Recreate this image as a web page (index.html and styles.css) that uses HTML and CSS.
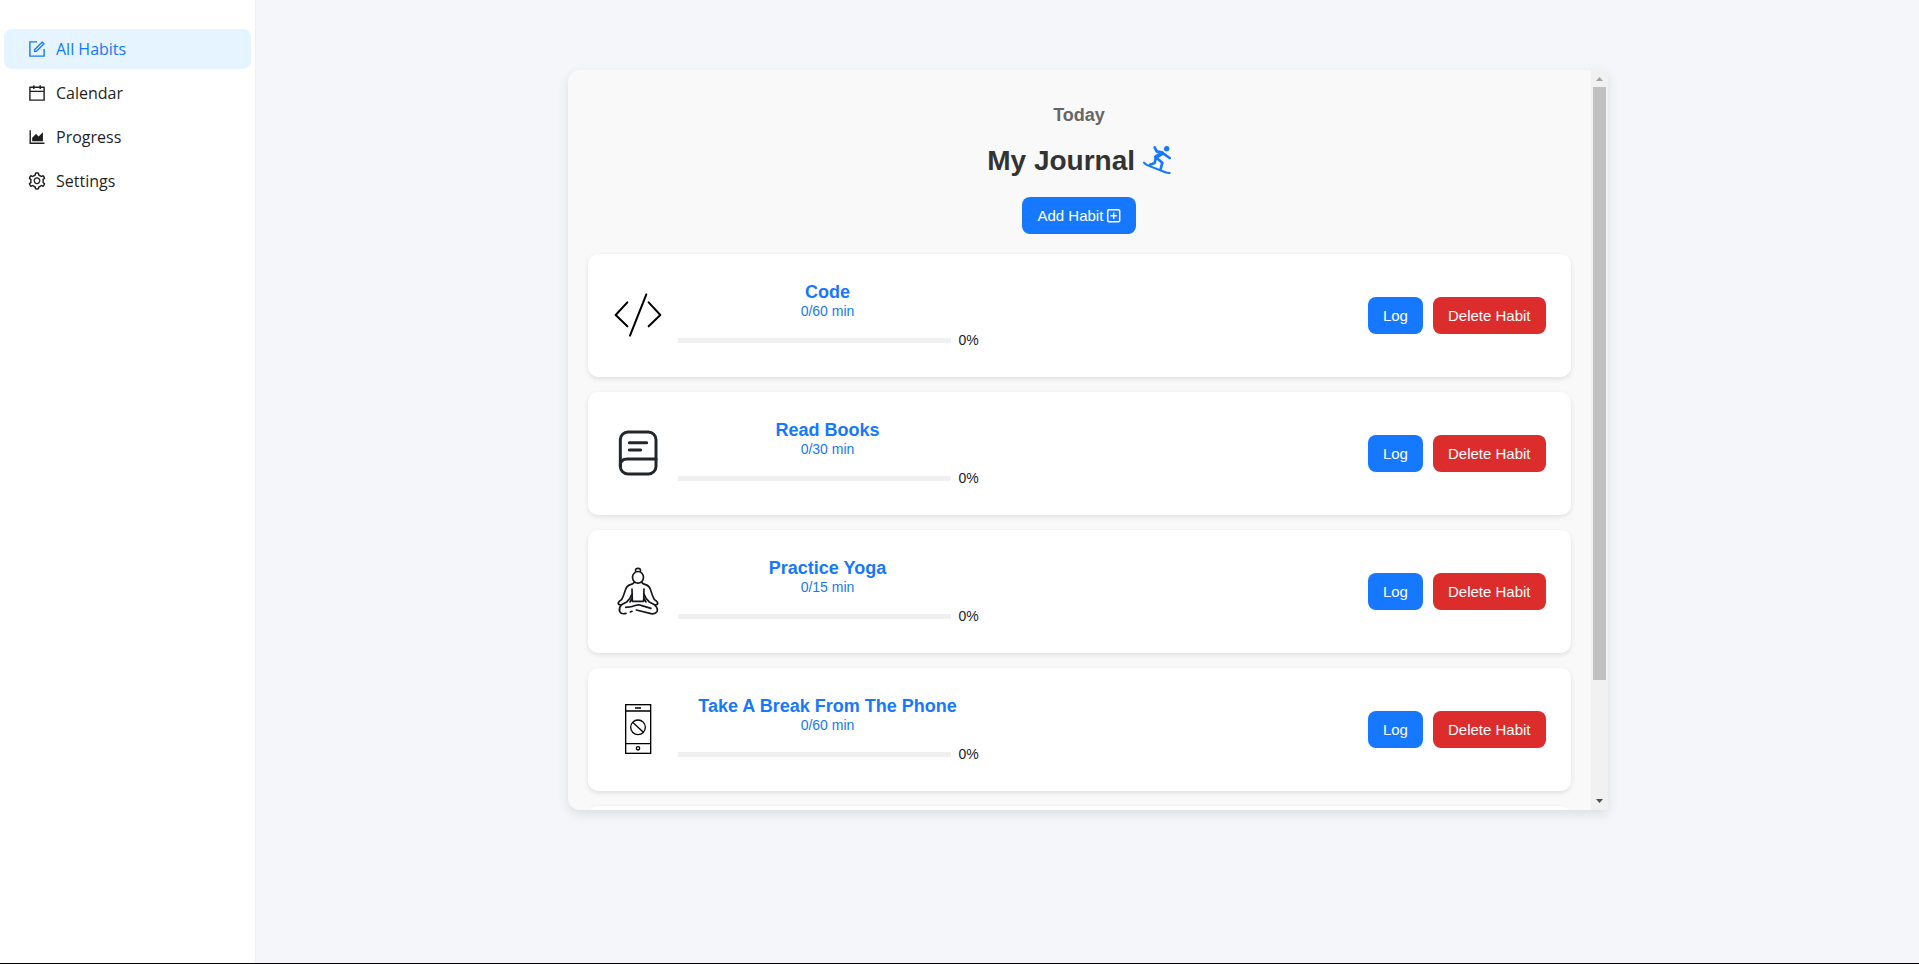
FILE: index.html
```html
<!DOCTYPE html>
<html lang="en">
<head>
<meta charset="utf-8">
<meta name="viewport" content="width=device-width, initial-scale=1">
<title>My Journal</title>
<link rel="stylesheet" href="styles.css">
</head>
<body>
<div class="layout">
  <nav class="sidebar" aria-label="Main">
    <a class="nav-item nav-item-active" href="#habits" aria-current="page">
      <svg class="nav-icon" viewBox="0 0 1024 1024" aria-hidden="true"><path d="M904 512h-56c-4.400 0-8 3.600-8 8v320H184V184h320c4.400 0 8-3.600 8-8v-56c0-4.400-3.600-8-8-8H144c-17.700 0-32 14.300-32 32v736c0 17.700 14.300 32 32 32h736c17.700 0 32-14.300 32-32V520c0-4.400-3.600-8-8-8z"/><path d="M355.900 534.900L354 653.800c-.1 8.900 7.100 16.200 16 16.200h.4l118-2.900c2-.1 4-.9 5.400-2.300l415.900-415c3.100-3.100 3.100-8.200 0-11.300L785.400 114.300c-1.600-1.600-3.600-2.300-5.700-2.300s-4.100.8-5.700 2.300l-415.800 415a8.300 8.300 0 0 0-2.300 5.600zm63.500 23.600L779.700 199l45.200 45.100-360.500 359.700-45.700 1.100.7-46.400z"/></svg>
      <span>All Habits</span>
    </a>
    <a class="nav-item" href="#calendar">
      <svg class="nav-icon" viewBox="0 0 1024 1024" aria-hidden="true"><path d="M880 184H712v-64c0-4.400-3.600-8-8-8h-56c-4.400 0-8 3.600-8 8v64H384v-64c0-4.400-3.600-8-8-8h-56c-4.400 0-8 3.600-8 8v64H144c-17.700 0-32 14.300-32 32v664c0 17.700 14.300 32 32 32h736c17.700 0 32-14.300 32-32V216c0-17.700-14.300-32-32-32zm-40 656H184V460h656v380zM184 392V256h128v48c0 4.400 3.600 8 8 8h56c4.400 0 8-3.600 8-8v-48h256v48c0 4.400 3.600 8 8 8h56c4.400 0 8-3.600 8-8v-48h128v136H184z"/></svg>
      <span>Calendar</span>
    </a>
    <a class="nav-item" href="#progress">
      <svg class="nav-icon" viewBox="0 0 1024 1024" aria-hidden="true"><path d="M888 792H200V168c0-4.400-3.600-8-8-8h-56c-4.400 0-8 3.600-8 8v688c0 4.400 3.600 8 8 8h752c4.400 0 8-3.600 8-8v-56c0-4.400-3.600-8-8-8zm-616-64h536c4.400 0 8-3.600 8-8V284c0-7.200-8.700-10.700-13.700-5.700L592 488.600l-125.400-124a8.030 8.030 0 0 0-11.300 0l-189 189.600a7.870 7.870 0 0 0-2.300 5.600V720c0 4.400 3.600 8 8 8z"/></svg>
      <span>Progress</span>
    </a>
    <a class="nav-item" href="#settings">
      <svg class="nav-icon" viewBox="0 0 1024 1024" aria-hidden="true"><path d="M924.800 625.700l-65.500-56c3.100-19 4.700-38.400 4.700-57.800s-1.600-38.800-4.700-57.800l65.500-56a32.030 32.030 0 0 0 9.300-35.200l-.9-2.600a443.740 443.740 0 0 0-79.700-137.900l-1.800-2.100a32.120 32.120 0 0 0-35.100-9.500l-81.300 28.900c-30-24.600-63.500-44-99.700-57.600l-15.700-85a32.050 32.050 0 0 0-25.800-25.700l-2.700-.5c-52.100-9.400-106.900-9.400-159 0l-2.700.5a32.050 32.050 0 0 0-25.800 25.700l-15.800 85.400a351.860 351.860 0 0 0-99 57.400l-81.900-29.100a32 32 0 0 0-35.100 9.500l-1.800 2.100a446.020 446.020 0 0 0-79.700 137.900l-.9 2.600c-4.500 12.500-.8 26.500 9.300 35.200l66.300 56.600c-3.100 18.800-4.600 38-4.600 57.100 0 19.200 1.500 38.400 4.600 57.100L99 625.500a32.030 32.030 0 0 0-9.300 35.200l.9 2.600c18.100 50.400 44.900 96.900 79.700 137.900l1.800 2.100a32.120 32.120 0 0 0 35.100 9.500l81.900-29.100c29.800 24.500 63.100 43.900 99 57.400l15.800 85.400a32.050 32.050 0 0 0 25.800 25.700l2.700.5a449.400 449.400 0 0 0 159 0l2.700-.5a32.050 32.050 0 0 0 25.800-25.700l15.700-85a350 350 0 0 0 99.700-57.600l81.300 28.900a32 32 0 0 0 35.100-9.500l1.800-2.100c34.800-41.100 61.600-87.500 79.700-137.900l.9-2.600c4.500-12.300.8-26.300-9.300-35zM788.300 465.900c2.500 15.100 3.800 30.600 3.800 46.100s-1.300 31-3.800 46.100l-6.600 40.100 74.700 63.900a370.030 370.030 0 0 1-42.600 73.600L721 702.800l-31.400 25.800c-23.900 19.600-50.500 35-79.300 45.800l-38.100 14.300-17.900 97a377.500 377.500 0 0 1-85 0l-17.900-97.200-37.800-14.500c-28.500-10.800-55-26.200-78.700-45.700l-31.400-25.900-93.400 33.200c-17-22.900-31.200-47.600-42.600-73.600l75.500-64.500-6.500-40c-2.400-14.900-3.700-30.300-3.700-45.500 0-15.300 1.200-30.600 3.700-45.500l6.500-40-75.500-64.500c11.300-26.100 25.600-50.700 42.600-73.600l93.400 33.200 31.400-25.900c23.700-19.500 50.200-34.900 78.700-45.700l37.900-14.300 17.900-97.200c28.100-3.200 56.800-3.200 85 0l17.900 97 38.100 14.300c28.700 10.800 55.400 26.200 79.300 45.800l31.400 25.800 92.800-32.900c17 22.900 31.200 47.600 42.600 73.600L781.800 426l6.500 39.900zM512 326c-97.200 0-176 78.800-176 176s78.800 176 176 176 176-78.800 176-176-78.800-176-176-176zm79.200 255.200A111.600 111.600 0 0 1 512 614c-29.900 0-58-11.700-79.200-32.800A111.600 111.600 0 0 1 400 502c0-29.900 11.700-58 32.800-79.200C454 401.600 482.100 390 512 390c29.900 0 58 11.600 79.200 32.800A111.600 111.600 0 0 1 624 502c0 29.900-11.700 58-32.800 79.200z"/></svg>
      <span>Settings</span>
    </a>
  </nav>

  <main class="content">
    <section class="journal">
      <div class="journal-scroll">
        <header class="journal-header">
          <h2 class="journal-day">Today</h2>
          <h1 class="journal-title">My Journal
            <svg class="title-icon" viewBox="131 16 84 84" aria-hidden="true"><circle cx="202" cy="24" r="8"/><g fill="none" stroke="#1677ff" stroke-linecap="round" stroke-linejoin="round"><path stroke-width="6" d="M134 66Q138 71 145 74L196 94Q203 97 211 97"/><path stroke-width="8" d="M166 20L172 32L187 35L211 52M169 54L166 67L152 72M172 52L189 66L184 85"/><path stroke-width="12" d="M188 38L170 49"/></g></svg>
          </h1>
          <button class="btn btn-primary" type="button">Add Habit
            <svg class="btn-icon" viewBox="0 0 15 15" aria-hidden="true"><rect x="1.700" y="1.700" width="12" height="12" rx="1.200"/><path d="M7.700 4.500v6.400M4.500 7.700h6.400"/></svg>
          </button>
        </header>

        <ul class="habit-list">
          <li class="habit">
            <svg class="habit-icon" viewBox="159 693 150 150" aria-hidden="true"><g fill="none" stroke="#000" stroke-width="6" stroke-linecap="round" stroke-linejoin="round"><path d="M202 727L167 765L202 799M266 727L301 765L266 799M259 703L210 827"/></g></svg>
            <div class="habit-info">
              <h3 class="habit-name">Code</h3>
              <p class="habit-goal">0/60 min</p>
              <div class="progress"><div class="progress-track" role="progressbar" aria-label="Code" aria-valuenow="0"></div><span class="progress-value">0%</span></div>
            </div>
            <div class="habit-actions"><button class="btn btn-primary" type="button">Log</button><button class="btn btn-danger" type="button">Delete Habit</button></div>
          </li>
          <li class="habit">
            <svg class="habit-icon" viewBox="39 57 150 150" aria-hidden="true"><g fill="none" stroke="#22272b" stroke-width="9" stroke-linecap="round"><rect x="61" y="66" width="107" height="126" rx="23"/><path d="M61 169V165Q61 147 82 147H168M88 98H140M88 120H122"/></g></svg>
            <div class="habit-info">
              <h3 class="habit-name">Read Books</h3>
              <p class="habit-goal">0/30 min</p>
              <div class="progress"><div class="progress-track" role="progressbar" aria-label="Read Books" aria-valuenow="0"></div><span class="progress-value">0%</span></div>
            </div>
            <div class="habit-actions"><button class="btn btn-primary" type="button">Log</button><button class="btn btn-danger" type="button">Delete Habit</button></div>
          </li>
          <li class="habit">
            <svg class="habit-icon" viewBox="39 50 150 150" aria-hidden="true"><g fill="none" stroke="#16161a" stroke-width="5" stroke-linecap="round" stroke-linejoin="round"><ellipse cx="114" cy="81" rx="16.500" ry="17.500"/><path d="M107 63Q105 54 114 54T121 63M103 95Q101 101 91 103Q80 106 77 117L70 137Q67 148 58 153Q53 157 56 162L63 164L80 155Q91 146 97 129M125 95Q127 101 137 103Q148 106 151 117L158 137Q161 148 170 153Q175 157 172 162L165 164L148 155Q137 146 131 129M96 116L97 153H131L132 116M97 142L90 155M131 142L138 155"/><path d="M63 165Q56 174 59 184Q64 193 78 189M165 165Q175 174 171 184Q166 192 153 190L109 179M77 171Q95 171 108 165Q116 162 123 165L153 174M91 185L96 183"/></g></svg>
            <div class="habit-info">
              <h3 class="habit-name">Practice Yoga</h3>
              <p class="habit-goal">0/15 min</p>
              <div class="progress"><div class="progress-track" role="progressbar" aria-label="Practice Yoga" aria-valuenow="0"></div><span class="progress-value">0%</span></div>
            </div>
            <div class="habit-actions"><button class="btn btn-primary" type="button">Log</button><button class="btn btn-danger" type="button">Delete Habit</button></div>
          </li>
          <li class="habit">
            <svg class="habit-icon" viewBox="39 45 150 150" aria-hidden="true"><g fill="none" stroke="#000" stroke-width="4"><rect x="77" y="44" width="75" height="146"/><path d="M77 63H152M77 161H152M105 54H123"/><circle cx="114" cy="112" r="22"/><path d="M98 97L130 127"/><circle cx="114" cy="175" r="5"/></g></svg>
            <div class="habit-info">
              <h3 class="habit-name">Take A Break From The Phone</h3>
              <p class="habit-goal">0/60 min</p>
              <div class="progress"><div class="progress-track" role="progressbar" aria-label="Take A Break From The Phone" aria-valuenow="0"></div><span class="progress-value">0%</span></div>
            </div>
            <div class="habit-actions"><button class="btn btn-primary" type="button">Log</button><button class="btn btn-danger" type="button">Delete Habit</button></div>
          </li>
          <li class="habit habit-empty"></li>
        </ul>
      </div>
      <div class="scrollbar" aria-hidden="true">
        <svg class="scroll-arrow scroll-arrow-up" viewBox="0 0 17 17"><path d="M5 11L8.500 7L12 11z"/></svg>
        <div class="scroll-track"><div class="scroll-thumb"></div></div>
        <svg class="scroll-arrow" viewBox="0 0 17 17"><path d="M5 6L8.500 10L12 6z"/></svg>
      </div>
    </section>
  </main>
</div>
</body>
</html>
```
FILE: styles.css
```css
* {
  box-sizing: border-box;
}

body {
  margin: 0;
  font-family: "Liberation Sans", Arial, sans-serif;
  color: #222;
  background: #f4f6fa;
}

h1, h2, h3, p, ul {
  margin: 0;
  padding: 0;
}

.layout {
  display: flex;
  min-height: 100vh;
  border-bottom: 1px solid #000;
}

.sidebar {
  display: flex;
  flex-direction: column;
  gap: 4px;
  width: 256px;
  flex-shrink: 0;
  padding: 29px 4px;
  background: #fff;
  border-right: 1px solid #f0f0f0;
}

.nav-item {
  display: flex;
  align-items: center;
  gap: 9px;
  height: 40px;
  padding: 0 23px;
  border-radius: 8px;
  font-family: "Open Sans", "Noto Sans", sans-serif;
  font-size: 16px;
  line-height: 24px;
  color: #1f1f1f;
  text-decoration: none;
}

.nav-item-active {
  color: #1677ff;
  background: #e6f4ff;
}

.nav-icon {
  width: 20px;
  height: 20px;
  fill: currentColor;
}

.content {
  display: flex;
  flex: 1;
  justify-content: center;
  align-items: flex-start;
  min-width: 0;
  padding: 70px 20px;
}

.journal {
  display: flex;
  flex: 1;
  max-width: 1040px;
  max-height: 740px;
  background: #f9f9f9;
  border-radius: 12px 0 0 12px;
  box-shadow: 0 4px 12px rgba(0, 0, 0, 0.1);
  overflow: hidden;
}

.journal-scroll {
  flex: 1;
  min-width: 0;
  padding: 35px 20px 20px;
  overflow-y: auto;
  scrollbar-width: none;
}

.journal-header {
  display: flex;
  flex-direction: column;
  align-items: center;
  gap: 20px;
  margin-bottom: 20px;
}

.journal-day {
  font-size: 18px;
  line-height: 20px;
  color: #666;
}

.journal-title {
  font-size: 28px;
  line-height: 32px;
  color: #333;
}

.title-icon {
  width: 28px;
  height: 28px;
  fill: #1677ff;
  vertical-align: -4px;
}

.btn {
  padding: 10px 15px;
  border: 0;
  border-radius: 8px;
  font-family: inherit;
  font-size: 15px;
  line-height: 17px;
  color: #fff;
  cursor: pointer;
}

.btn-primary {
  background: #1677ff;
}

.btn-danger {
  background: #dc2c2c;
}

.btn-icon {
  width: 15px;
  height: 15px;
  margin-left: -2px;
  fill: none;
  stroke: #fff;
  stroke-width: 1.5;
  vertical-align: -2px;
}

.habit-list {
  display: grid;
  gap: 15px;
  list-style: none;
}

.habit {
  display: flex;
  align-items: center;
  padding: 25px;
  background: #fff;
  border-radius: 10px;
  box-shadow: 0 2px 5px rgba(0, 0, 0, 0.1);
}

.habit-empty {
  min-height: 123px;
}

.habit-icon {
  width: 50px;
  height: 50px;
  margin-right: 15px;
  overflow: visible;
}

.habit-info {
  width: 300px;
  padding: 3px 0 1px;
  text-align: center;
}

.habit-name {
  font-size: 18px;
  line-height: 20px;
  color: #1677ff;
}

.habit-goal {
  font-size: 14px;
  line-height: 18px;
  color: #1677ff;
}

.progress {
  display: flex;
  align-items: center;
  gap: 8px;
  margin-top: 9px;
  font-size: 14px;
  line-height: 22px;
}

.progress-track {
  flex: 1;
  height: 5px;
  background: #f0f0f0;
}

.progress-value {
  width: 19px;
}

.habit-actions {
  display: flex;
  gap: 10px;
  margin-left: auto;
}

.scrollbar {
  display: flex;
  flex-direction: column;
  width: 17px;
  background: #f1f1f1;
}

.scroll-arrow {
  width: 17px;
  height: 17px;
  fill: #505050;
}

.scroll-arrow-up {
  fill: #a3a3a3;
}

.scroll-track {
  flex: 1;
  padding: 0 2px;
}

.scroll-thumb {
  height: 84%;
  background: #c1c1c1;
}
```
